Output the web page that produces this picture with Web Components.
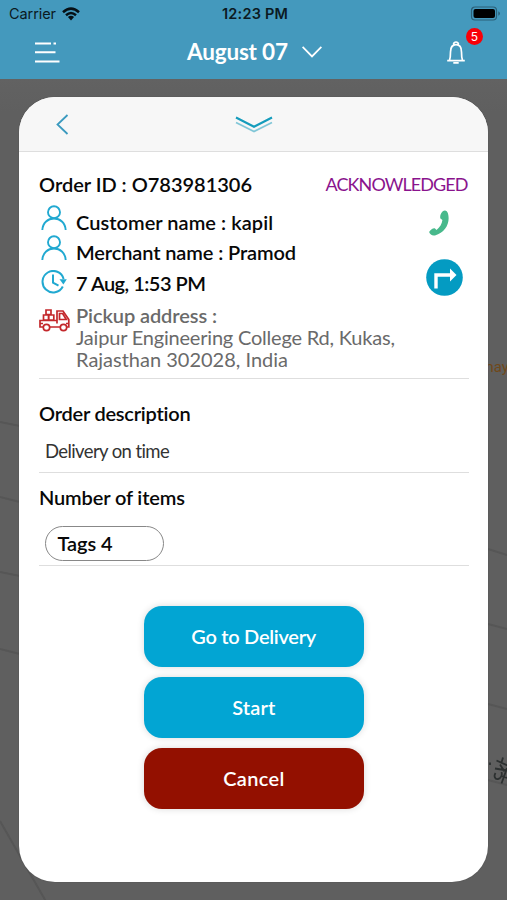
<!DOCTYPE html>
<html lang="en"><head><meta charset="utf-8"><title>Order details</title>
<style>html,body{margin:0;height:100%;overflow:hidden}body{font-family:Lato,"Open Sans",sans-serif;color:#080808;background:#5f5f5f}</style></head>
<body><order-app></order-app>
<script>
const define = (name, html, init) => customElements.define(name, class extends HTMLElement {
  connectedCallback() {
    if (this.shadowRoot) return;
    const t = document.createElement('template');
    t.innerHTML = html;
    this.attachShadow({mode: 'open'}).append(t.content.cloneNode(true));
    if (init) init(this, this.shadowRoot);
  }
});

// Single-line text tracked to a given line width.
define('fit-text', `<style>:host{display:block;white-space:nowrap}span{display:inline-block}</style><span><slot></slot></span>`, (el, root) => {
  const s = root.querySelector('span'), w = +el.getAttribute('w');
  el.style.fontSize = (el.getAttribute('size') || 20) + 'px';
  el.style.fontWeight = el.getAttribute('weight') || 600;
  el.style.width = w + 'px';
  const n = el.textContent.length;
  const gap = (w - s.getBoundingClientRect().width) / (n - 1);
  s.style.letterSpacing = gap + 'px';
  s.style.marginRight = -gap + 'px';
});

define('status-bar', `<style>:host{display:grid;grid-template-columns:1fr auto 1fr;align-items:center;height:27px;padding:0 6px 0 9px;color:#0b1a22;font-family:Inter,sans-serif;line-height:27px}
.l{display:flex;align-items:center;gap:6px}.r{justify-self:end;display:flex}svg{display:block}</style>
<div class="l"><fit-text w="47" size="14.5" weight="400">Carrier</fit-text>
<svg width="18" height="14" viewBox="0 0 18 14" fill="none" stroke="#061015" stroke-width="2.5"><path d="M1 5.2Q9-2 17 5.2M4 8.2Q9 3.8 14 8.2"/><path d="M5.9 10Q9 7.5 12.1 10L9 13.4Z" fill="#061015" stroke="none"/></svg></div>
<fit-text w="66" size="14.5" weight="600">12:23 PM</fit-text>
<div class="r"><svg width="31" height="15" viewBox="0 0 31 15"><rect x="1.5" y="1" width="25" height="13" rx="3.5" fill="none" stroke="#2b6078" stroke-width="1.2"/><rect x="3.5" y="3" width="21.5" height="9" rx="2" fill="#000"/><path d="M28.3 5.2Q30 6 30 7.5T28.3 9.8Z" fill="#2b6078"/></svg></div>`);

define('app-header', `<style>:host{display:block;height:79px;background:#4499bd;color:#fff}
nav{display:grid;grid-template-columns:1fr auto 1fr;align-items:center;height:49px;padding:0 41px 0 35px}
.t{display:flex;align-items:center;gap:14px;margin-left:8px;line-height:49px}svg{display:block}.bell{justify-self:end;position:relative;margin-top:2px}
b{position:absolute;left:20px;top:-13px;width:17px;height:17px;border-radius:50%;background:#f80008;font:400 12px/17px Inter,sans-serif;text-align:center}</style>
<status-bar></status-bar>
<nav><svg width="26" height="24" viewBox="0 0 26 24" stroke="#fff" stroke-width="1.9"><path d="M0 3.5h16M18.5 3.5h2.5M0 12.3h20.5M0 21.5h24.5"/></svg>
<div class="t"><fit-text w="101" size="22.5" weight="700">August 07</fit-text><svg width="20" height="12" viewBox="0 0 20 12" fill="none" stroke="#fff" stroke-width="1.8"><path d="M.6.8 10 10.5 19.4.8"/></svg></div>
<div class="bell"><svg width="20" height="24" viewBox="0 0 20 24" fill="none" stroke="#fff" stroke-width="1.7"><path d="M1.2 19.6h17.6M3.5 19.3c.9-2.4 1-4.8 1-8.3 0-4.5 2-7.3 5.5-7.3s5.5 2.8 5.5 7.3c0 3.5.1 5.9 1 8.3M7.5 3.2Q8 1 10 1t2.5 2.2M7.3 21.8h5.4"/></svg><b>5</b></div></nav>`);

define('map-backdrop', `<style>:host{display:block;position:absolute;inset:79px 0 0;background:linear-gradient(#626262,#5f5f5f 4%);overflow:hidden}svg{position:absolute;inset:0}
span{position:absolute;white-space:nowrap;left:485.500px;top:278px;font:15px/20px Roboto,sans-serif;color:#704819}</style>
<svg width="507" height="821" viewBox="0 79 507 821" fill="none" stroke="#565656" stroke-width="2"><path d="M0 422 20 426M0 497 20 502M0 572 20 576M0 649 20 654M0 821 48 905M488 549 507 555M488 624 507 629M488 704 507 709M488 780 507 785"/>
<path d="M490 762.500v2.500M496.500 760.500l11 5M503 757.500l-1.500 5M495 768.500l12 2M500 764.500l4.500 7M495.500 773c-2 3-.5 6.500 2.500 6s4.500-4 3.500-7M507 768l-5.500 15.500M501.500 776l5.500 2" stroke="#2c3030" stroke-width="1.8"/></svg>
<span>nay</span>`);

const person = `<svg width="26" height="26" viewBox="0 0 26 26" fill="none" stroke="#21a9d1" stroke-width="1.9"><circle cx="13" cy="7.2" r="6"/><path d="M1.300 25C1.800 17.500 7 13.500 13 13.500S24.200 17.500 24.700 25"/></svg>`;
const clock = `<svg width="26" height="24" viewBox="0 0 26 24" fill="none" stroke="#21a9d1" stroke-width="2"><path d="M22.600 9A10.700 10.700 0 1 0 21.800 16.500M12 4.500v8.200l5.500 3"/><path d="M18.500 9.200h7.300l-3.400 5.300z" fill="#21a9d1" stroke="none"/></svg>`;
const truck = `<svg width="31" height="23" viewBox="0 0 31 23" fill="none" stroke="#c3272b" stroke-width="1.700"><path d="M4 18H1v-6.500h17V2h6l5.800 8.500V18H28M11 18h10M20.500 4.500v6h6.800l-3.700-6zM18 11.500v3M1 14.500h3M27 14.500h3M7 1h5v4.700H7zM4.500 6h5v5.200h-5zM9.800 6h5v5.200h-5z"/><circle cx="7.500" cy="18.500" r="3.200"/><circle cx="24.500" cy="18.500" r="3.200"/></svg>`;

define('info-row', `<style>:host{display:grid;grid-template-columns:37px 1fr;line-height:30.500px}svg{display:block}</style><div class="i"></div><div><slot></slot></div>`, (el, r) => {
  const kind = el.getAttribute('icon');
  r.querySelector('.i').innerHTML = {person, clock, truck}[kind];
  r.querySelector('svg').style.margin = {person: '-2px 0 0 2px', clock: '2.500px 0 0 2px', truck: '5px 0 0 -.5px'}[kind];
});

define('action-button', `<style>:host{display:block}button{all:unset;box-sizing:border-box;display:flex;align-items:center;justify-content:center;width:220px;height:61px;border-radius:18px;background:var(--tone,#02a5d3);color:#fff;box-shadow:0 0 7px #00000026;line-height:61px}</style><button><slot></slot></button>`);

define('order-card', `<style>:host{box-sizing:border-box;display:flex;flex-direction:column;width:469px;height:785px;border-radius:36px;background:#fff;overflow:hidden;box-shadow:0 0 1px #444}
svg{display:block}header{box-sizing:border-box;flex:none;height:55px;background:#f7f7f7;border-bottom:1px solid #dedede;display:grid;grid-template-columns:1fr auto 1fr;align-items:center;padding:0 37px}
main{padding:18px 19.500px 0 20px}.top{display:flex;justify-content:space-between;line-height:29px;margin-bottom:7.500px}.st{color:#8a138d}
.info{display:grid;grid-template-columns:1fr 43px;height:171.500px;border-bottom:1px solid #dedede}.rows info-row:last-child{margin-top:5.500px;line-height:22px;color:#6a6a6a}
.side{display:flex;flex-direction:column;gap:21.500px;padding-top:2.500px}.side svg:first-child{margin-left:2px}
.desc{box-sizing:border-box;height:94px;border-bottom:1px solid #dedede;padding-top:18.500px;line-height:30px}.desc .v{padding:9px 0 0 6px;line-height:28px;color:#333}
.num{box-sizing:border-box;height:93px;border-bottom:1px solid #dedede;padding-top:9px;line-height:30px}.pill{box-sizing:border-box;width:119px;height:35px;margin:14px 0 0 6px;border:1px solid #888;border-radius:18px;padding-left:11.500px;line-height:33px}
.acts{display:grid;justify-content:center;gap:10px;margin-top:40px}</style>
<header><svg width="13" height="21" viewBox="0 0 13 21" fill="none" stroke="#3b9abf" stroke-width="1.8"><path d="M11.500 1 1.500 10.500l10 9.500"/></svg>
<svg width="38" height="17" viewBox="0 0 38 17" fill="none"><path d="M1 6.500 19 15.500 37 6.500" stroke="#80c6d7" stroke-width="1.800"/><path d="M1 1.500 19 10.800 37 1.500" stroke="#149cbc" stroke-width="2.100"/></svg></header>
<main><div class="top"><fit-text w="213">Order ID : O783981306</fit-text><fit-text class="st" w="143" size="18" weight="400">ACKNOWLEDGED</fit-text></div>
<div class="info"><div class="rows">
<info-row icon="person"><fit-text w="197">Customer name : kapil</fit-text></info-row>
<info-row icon="person"><fit-text w="220">Merchant name : Pramod</fit-text></info-row>
<info-row icon="clock"><fit-text w="130">7 Aug, 1:53 PM</fit-text></info-row>
<info-row icon="truck"><fit-text w="141">Pickup address :</fit-text><fit-text w="319" weight="400">Jaipur Engineering College Rd, Kukas,</fit-text><fit-text w="212" weight="400">Rajasthan 302028, India</fit-text></info-row></div>
<div class="side"><svg width="22" height="28" viewBox="0 0 22 28"><path d="M14.500 2.500C17 .8 19 1.500 20 4.500 22.500 14 17.500 23.500 7 26.500c-3 .5-4.800-.8-5.900-3.400 1-1.700 3.200-3.900 5.700-3.800l1.700 1.600c3.400-2.600 5.500-5.800 5.900-9.800l-2-1.600c-.7-2 .3-5.300 2.100-7z" fill="#48b98c"/></svg>
<svg width="37" height="37" viewBox="0 0 37 37"><circle cx="18.500" cy="18.500" r="18.300" fill="#049bc2"/><path d="M10 29.500V16H25" fill="none" stroke="#fff" stroke-width="3.400"/><path d="M24 9.500 30.500 16 24 22.500z" fill="#fff"/></svg></div></div>
<div class="desc"><fit-text w="152">Order description</fit-text><div class="v"><fit-text w="125" size="18.5" weight="400">Delivery on time</fit-text></div></div>
<div class="num"><fit-text w="146">Number of items</fit-text><div class="pill"><fit-text w="55">Tags 4</fit-text></div></div>
<div class="acts"><action-button><fit-text w="125">Go to Delivery</fit-text></action-button><action-button><fit-text w="43">Start</fit-text></action-button><action-button style="--tone:#931000"><fit-text w="61">Cancel</fit-text></action-button></div></main>`);

define('order-app', `<style>:host{display:block;position:relative;width:507px;height:900px;overflow:hidden}app-header,order-card{position:relative}order-card{margin:18px 0 0 19px}</style><map-backdrop></map-backdrop><app-header></app-header><order-card></order-card>`);
</script></body></html>
